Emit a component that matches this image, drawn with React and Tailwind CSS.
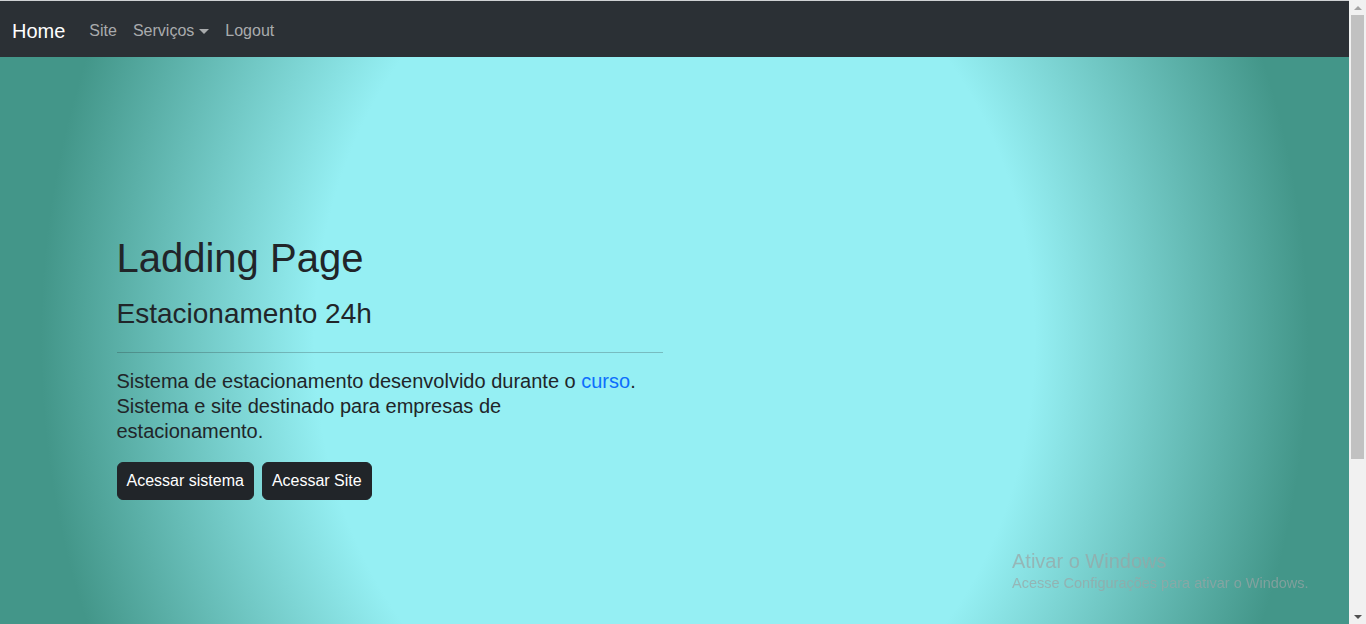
import React from 'react';

const font = { fontFamily: '"Liberation Sans", Arial, sans-serif' };

function Navbar() {
  return (
    <nav className="h-[57px] border-t border-[#cfd1d3] bg-[#2b3035] flex items-center px-3 pt-[3px]">
      <a href="#" className="text-white text-[20px] leading-[30px] mr-4">Home</a>
      <ul className="flex items-center text-[16px] leading-6 text-[#a9abad]">
        <li><a href="#" className="block px-2 py-2">Site</a></li>
        <li>
          <a href="#" className="flex items-center px-2 py-2">
            Serviços
            <span className="ml-[5px] mt-[2px] w-0 h-0 border-x-[5px] border-x-transparent border-t-[5px] border-t-[#a9abad]" />
          </a>
        </li>
        <li><a href="#" className="block px-2 py-2">Logout</a></li>
      </ul>
    </nav>
  );
}

function Scrollbar() {
  return (
    <div className="w-[17px] bg-[#f1f1f1] flex flex-col items-center">
      <div className="h-[15px] flex items-center justify-center">
        <span className="w-0 h-0 border-x-[4px] border-x-transparent border-b-[4px] border-b-[#a3a3a3]" />
      </div>
      <div className="w-[13px] h-[444px] bg-[#c1c1c1]" />
      <div className="flex-1" />
      <div className="h-[15px] flex items-center justify-center">
        <span className="w-0 h-0 border-x-[4px] border-x-transparent border-t-[4px] border-t-[#505050]" />
      </div>
    </div>
  );
}

export default function App() {
  return (
    <div style={font} className="h-[624px] overflow-hidden flex text-[#212529]">
      <div className="flex-1 flex flex-col">
        <Navbar />
        <main className="flex-1 bg-[radial-gradient(ellipse_720px_860px_at_50%_283px,#95eff3_50%,#439689_88%)] pt-[177px]">
          <div className="max-w-[1140px] mx-auto px-3">
            <div className="w-[546px]">
              <h1 className="text-[40px] leading-[48px] mb-[15px]">Ladding Page</h1>
              <h2 className="text-[28px] leading-[33.6px]">Estacionamento 24h</h2>
              <hr className="mt-[21px] mb-4 border-0 border-t border-[#212529]/25" />
              <p className="text-[20px] leading-[25px] max-w-[530px]">
                Sistema de estacionamento desenvolvido durante o <a href="#" className="text-[#0d6efd]">curso</a>.
                Sistema e site destinado para empresas de estacionamento.
              </p>
              <div className="flex gap-2 mt-[18px]">
                <button className="bg-[#212529] border border-[#212529] text-white text-[16px] leading-6 px-[9px] py-1.5 rounded-md">Acessar sistema</button>
                <button className="bg-[#212529] border border-[#212529] text-white text-[16px] leading-6 px-[9px] py-1.5 rounded-md">Acessar Site</button>
              </div>
            </div>
          </div>
        </main>
      </div>
      <Scrollbar />
      <div className="fixed left-[1012px] top-[548px] pointer-events-none text-[#9aa4a4]/70">
        <div className="text-[20px] leading-[26px]">Ativar o Windows</div>
        <div className="text-[14.5px] leading-[18px]">Acesse Configurações para ativar o Windows.</div>
      </div>
    </div>
  );
}
